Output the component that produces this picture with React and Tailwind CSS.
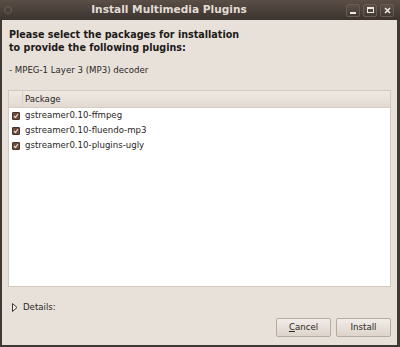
import React from 'react';

const rows = ['gstreamer0.10-ffmpeg', 'gstreamer0.10-fluendo-mp3', 'gstreamer0.10-plugins-ugly'];

const Check = () => (
  <span className="w-[8px] h-[8px] rounded-[1px] bg-[#6b4b3e] border border-[#4a3328] flex items-center justify-center">
    <svg width="6" height="6" viewBox="0 0 6 6">
      <path d="M1 3 L2.5 4.5 L5 1" fill="none" stroke="#e9ddd6" strokeWidth="1.2" />
    </svg>
  </span>
);

const WinButton = ({ children }) => (
  <span className="w-[14px] h-[13px] rounded-[2px] border border-[#6b5c52] bg-gradient-to-b from-[#5c5049] to-[#443a34] flex items-center justify-center">
    {children}
  </span>
);

export default function App() {
  return (
    <div className="w-[400px] h-[347px] flex flex-col bg-[#3f3833] overflow-hidden" style={{ fontFamily: '"DejaVu Sans", sans-serif' }}>
      <div className="h-[20px] flex items-center px-[4px] bg-gradient-to-b from-[#5a4e46] to-[#3c3430] shrink-0">
        <span className="w-[8px] h-[8px] rounded-full border border-[#6d625a]" />
        <div className="flex-1 text-center text-[10.6px] font-bold text-[#e1ddd5] pr-[20px]">Install Multimedia Plugins</div>
        <div className="flex gap-[3px] pr-[2px]">
          <WinButton>
            <span className="w-[6px] h-[2px] bg-[#ece8e2] mt-[5px]" />
          </WinButton>
          <WinButton>
            <span className="w-[7px] h-[6px] border border-[#ece8e2] border-t-2" />
          </WinButton>
          <WinButton>
            <svg width="7" height="7" viewBox="0 0 7 7">
              <path d="M1 1 L6 6 M6 1 L1 6" stroke="#ece8e2" strokeWidth="1.6" />
            </svg>
          </WinButton>
        </div>
      </div>
      <div className="flex-1 ml-[2px] mr-[3px] mb-[2px] bg-[#e8e1da] flex flex-col px-[6px] pt-[8px] pb-[8px]">
        <div className="text-[9.6px] font-bold leading-[13px] text-[#1c1a18] pl-[1px]">
          Please select the packages for installation<br />to provide the following plugins:
        </div>
        <div className="text-[8.6px] text-[#2a2725] mt-[10px] leading-[12px] pl-[1px]">- MPEG-1 Layer 3 (MP3) decoder</div>
        <div className="mt-[14px] h-[197px] flex flex-col bg-white border border-[#d3c9c0]">
          <div className="h-[17px] flex bg-gradient-to-b from-[#efe9e4] to-[#e2d9d1] border-b border-[#d6ccc4] shrink-0">
            <div className="w-[14px] border-r border-[#d8cfc7]" />
            <div className="text-[8.6px] text-[#2a2725] flex items-center pl-[2px]">Package</div>
          </div>
          <div className="flex flex-col">
            {rows.map((r) => (
              <div key={r} className="h-[15px] flex items-center pl-[3px] gap-[5px]">
                <Check />
                <span className="text-[8.6px] text-[#2a2725]">{r}</span>
              </div>
            ))}
          </div>
        </div>
        <div className="mt-[14px] flex items-center gap-[5px] pl-[4px] text-[8.6px] text-[#2a2725]">
          <svg width="6" height="9" viewBox="0 0 6 9">
            <path d="M0.5 0.5 L5 4.5 L0.5 8.5 Z" fill="#f6f3ef" stroke="#3a3633" strokeWidth="1" />
          </svg>
          <span>Details:</span>
        </div>
        <div className="mt-auto flex justify-end gap-[5px]">
          <button className="w-[55px] h-[19px] rounded-[2px] border border-[#b7aba0] bg-gradient-to-b from-[#f1ede9] to-[#ddd4cb] text-[8.6px] text-[#2a2725]">
            <span className="underline">C</span>ancel
          </button>
          <button className="w-[55px] h-[19px] rounded-[2px] border border-[#b7aba0] bg-gradient-to-b from-[#f1ede9] to-[#ddd4cb] text-[8.6px] text-[#2a2725]">
            Install
          </button>
        </div>
      </div>
    </div>
  );
}
